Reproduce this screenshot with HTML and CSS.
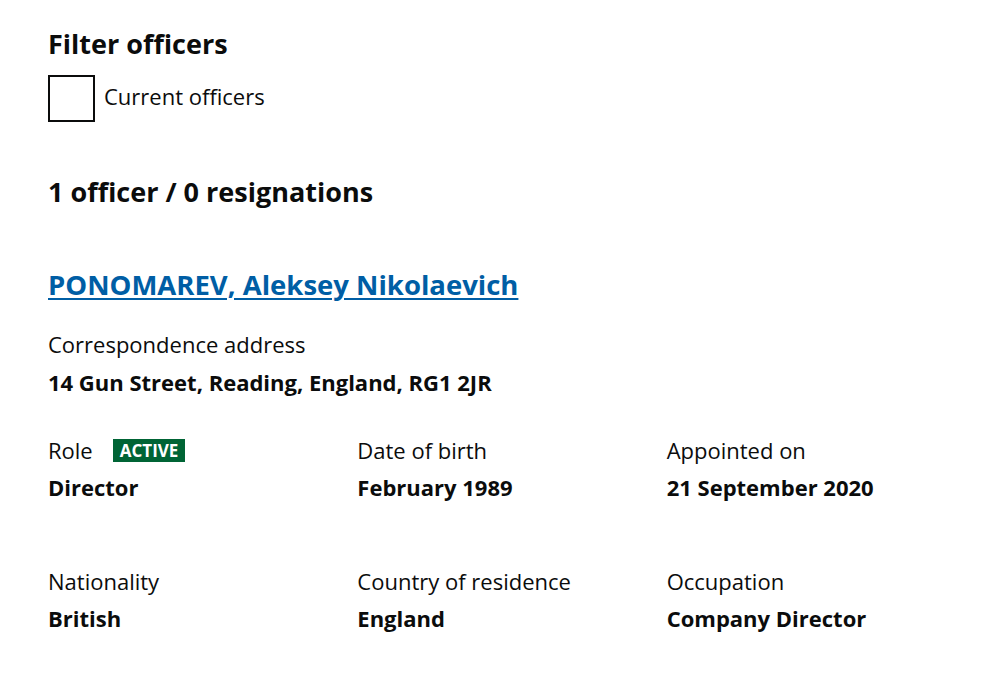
FILE: index.html
```html
<!DOCTYPE html>
<html lang="en">
<head>
<meta charset="utf-8">
<title>Officers</title>
<link rel="stylesheet" href="styles.css">
</head>
<body>
<main class="page">
  <section class="filter">
    <h2 class="heading">Filter officers</h2>
    <label class="checkbox">
      <span class="box"></span>
      <span class="checkbox-label">Current officers</span>
    </label>
  </section>

  <h2 class="heading count">1 officer / 0 resignations</h2>

  <section class="officer">
    <h2 class="officer-name"><a href="#">PONOMAREV, Aleksey Nikolaevich</a></h2>
    <dl class="field">
      <dt>Correspondence address</dt>
      <dd>14 Gun Street, Reading, England, RG1 2JR</dd>
    </dl>
    <div class="grid">
      <dl class="field">
        <dt>Role <span class="tag">Active</span></dt>
        <dd>Director</dd>
      </dl>
      <dl class="field">
        <dt>Date of birth</dt>
        <dd>February 1989</dd>
      </dl>
      <dl class="field">
        <dt>Appointed on</dt>
        <dd>21 September 2020</dd>
      </dl>
    </div>
    <div class="grid">
      <dl class="field">
        <dt>Nationality</dt>
        <dd>British</dd>
      </dl>
      <dl class="field">
        <dt>Country of residence</dt>
        <dd>England</dd>
      </dl>
      <dl class="field">
        <dt>Occupation</dt>
        <dd>Company Director</dd>
      </dl>
    </div>
  </section>
</main>
</body>
</html>
```

FILE: styles.css
```css
html, body {
  margin: 0;
  padding: 0;
  background: #ffffff;
}
body {
  font-family: "Open Sans", "Lato", Arial, sans-serif;
  color: #0b0c0c;
}
.page {
  width: 928px;
  padding: 29px 48px 40px;
}
.heading {
  margin: 0;
  font-size: 27px;
  line-height: 30px;
  font-weight: 700;
}
.checkbox {
  display: flex;
  align-items: center;
  margin-top: 16px;
}
.box {
  width: 43px;
  height: 43px;
  border: 2px solid #0b0c0c;
  display: block;
}
.checkbox-label {
  font-size: 22px;
  line-height: 25px;
  margin-left: 9px;
  padding-bottom: 4px;
}
.count {
  margin-top: 55px;
}
.officer-name {
  margin: 63px 0 0;
  font-size: 27.5px;
  line-height: 30px;
  font-weight: 700;
}
.officer-name a {
  color: #005ea5;
  text-decoration: underline;
  text-decoration-thickness: 2px;
  text-underline-offset: 3px;
}
.field {
  margin: 0;
}
.officer > .field {
  margin-top: 32px;
}
.field dt {
  font-size: 22px;
  line-height: 25px;
  display: flex;
  align-items: center;
}
.field dd {
  margin: 13px 0 0;
  font-size: 22px;
  line-height: 25px;
  font-weight: 700;
}
.grid {
  display: grid;
  grid-template-columns: repeat(3, 1fr);
  margin-top: 43px;
}
.grid .field dd {
  margin-top: 12px;
}
.grid + .grid {
  margin-top: 69px;
}
.tag {
  display: inline-block;
  margin-left: 20px;
  background: #006435;
  color: #ffffff;
  font-weight: 700;
  font-size: 17px;
  line-height: 23px;
  padding: 0 7px;
  text-transform: uppercase;
}
```
